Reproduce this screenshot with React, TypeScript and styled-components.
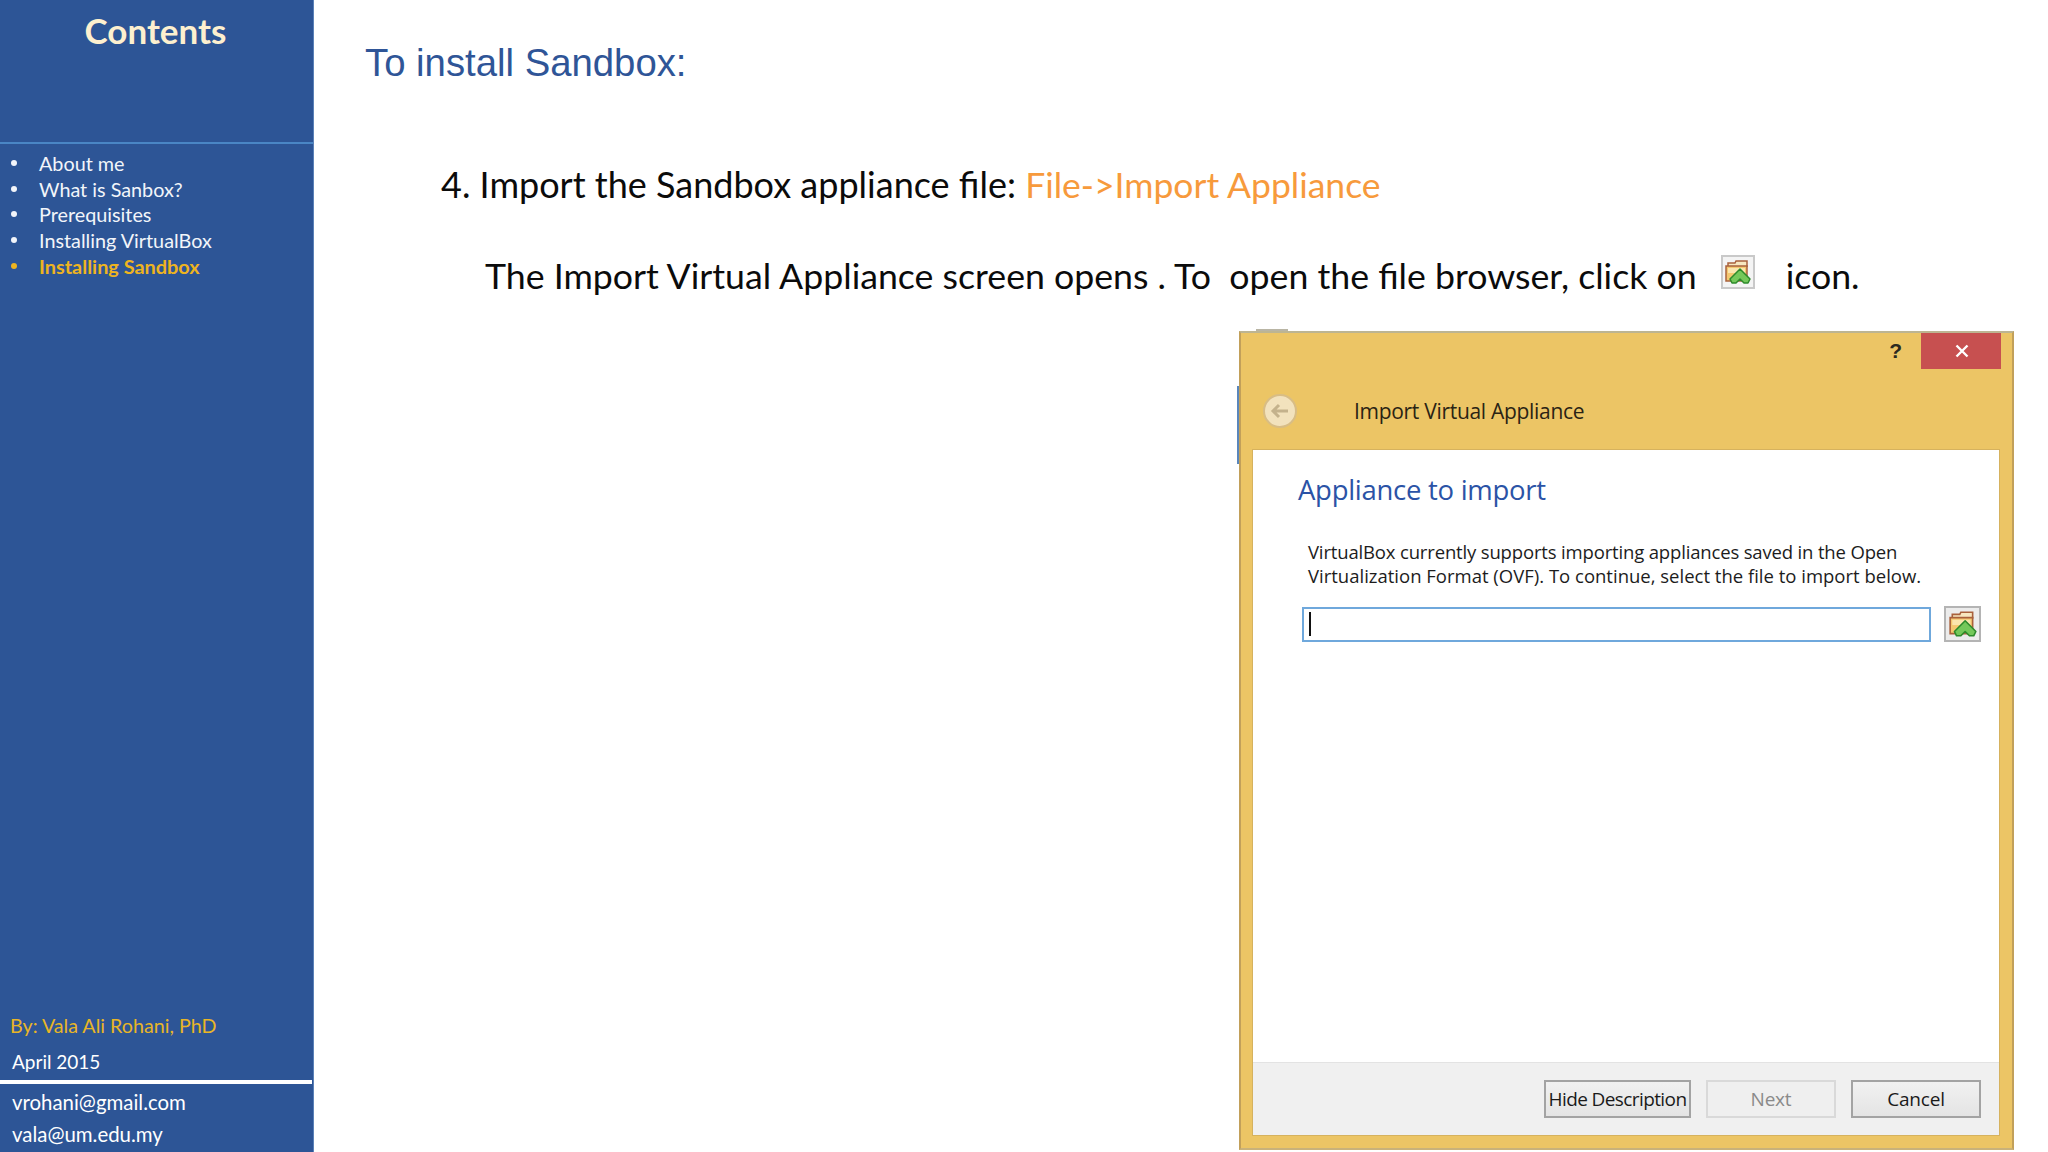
import styled, { createGlobalStyle } from "styled-components";

const GlobalStyle = createGlobalStyle`
    html, body {
        margin: 0;
        padding: 0;
        background: #fff;
    }
`;

const Page = styled.div`
    display: flex;
    width: 2048px;
    height: 1152px;
    overflow: hidden;
    font-family: "Lato", "Liberation Sans", sans-serif;
`;

const Sidebar = styled.aside`
    display: flex;
    flex-direction: column;
    flex: none;
    width: 314px;
    height: 1152px;
    box-sizing: border-box;
    background: #2d5596;
    border-right: 1px solid #5b82b8;
    color: #fff;
`;

const SideTitle = styled.h1`
    margin: 0;
    height: 144px;
    box-sizing: border-box;
    border-bottom: 2px solid #4a86c5;
    padding-top: 9px;
    padding-right: 2px;
    font-size: 35px;
    line-height: 42px;
    font-weight: 700;
    text-align: center;
    color: #fdf0cf;
`;

const NavList = styled.ul`
    list-style: none;
    margin: 0;
    padding: 6.5px 0 0 11px;
`;

const NavItem = styled.li<{ $active?: boolean }>`
    display: flex;
    align-items: center;
    height: 25.6px;
    font-size: ${(p) => (p.$active ? 19.9 : 19.8)}px;
    font-weight: ${(p) => (p.$active ? 700 : 400)};
    color: ${(p) => (p.$active ? "#eeb41f" : "#f2f5fa")};

    &::before {
        content: "";
        flex: none;
        width: 6px;
        height: 6px;
        margin-right: 22px;
        border-radius: 50%;
        background: currentColor;
    }
`;

const SideFooter = styled.div`
    margin-top: auto;
    display: flex;
    flex-direction: column;
`;

const Author = styled.div`
    padding-left: 10px;
    font-size: 19.7px;
    line-height: 24px;
    color: #e8b526;
`;

const DateLine = styled.div`
    padding: 12px 0 6px 12px;
    font-size: 19px;
    line-height: 24px;
`;

const FooterRule = styled.div`
    height: 4px;
    margin-right: 1px;
    background: #fff;
`;

const Contacts = styled.div`
    display: flex;
    flex-direction: column;
    gap: 8px;
    padding: 6px 0 6px 12px;
    font-size: 20.4px;
    line-height: 24px;
`;

const Content = styled.main`
    flex: 1;
    display: flex;
    flex-direction: column;
    min-width: 0;
`;

const Heading = styled.h2`
    margin: 0;
    padding: 39px 0 0 51px;
    font-family: "Liberation Sans", Arial, sans-serif;
    font-size: 38.3px;
    line-height: 48px;
    font-weight: 400;
    color: #2f5597;
`;

const StepLine = styled.p`
    margin: 0;
    padding: 74px 0 0 127px;
    font-size: 36px;
    line-height: 46px;
    color: #0b0b0b;
`;

const Orange = styled.span`
    font-size: 35.5px;
    color: #f79a3c;
`;

const InfoLine = styled.p`
    display: flex;
    align-items: center;
    margin: 0;
    padding: 45px 0 0 171px;
    font-size: 35.7px;
    line-height: 46px;
    white-space: pre;
    color: #0b0b0b;
`;

const InlineIcon = styled.span`
    display: inline-flex;
    align-items: center;
    justify-content: center;
    width: 34px;
    height: 34px;
    margin: -9px 31px 0 24px;
    box-sizing: border-box;
    background: #f4f4f4;
    border: 2px solid #c9c9c9;
`;

const DialogRow = styled.div`
    display: flex;
    justify-content: flex-end;
    padding: 32px 34px 0 0;
`;

const Dialog = styled.section`
    position: relative;
    display: flex;
    flex-direction: column;
    width: 775px;
    height: 819px;
    box-sizing: border-box;
    padding: 0 12px 12px 11px;
    background: #ecc565;
    border: 2px solid #c9b27a;
    border-top-color: #bdb592;
    border-left-color: #c2a05a;
    border-right-color: #c2a05a;
    font-family: "Open Sans", "Noto Sans", sans-serif;

    /* bits of the window behind the dialog */
    &::before {
        content: "";
        position: absolute;
        left: -4px;
        top: 53px;
        width: 2px;
        height: 78px;
        background: #5a86bb;
    }

    &::after {
        content: "";
        position: absolute;
        left: 15px;
        top: -4px;
        width: 32px;
        height: 2px;
        background: #b9b5a4;
    }
`;

const TopBar = styled.div`
    display: flex;
    justify-content: flex-end;
    align-items: center;
    flex: none;
    height: 36px;
`;

const HelpMark = styled.span`
    margin-right: 19px;
    font-family: "Liberation Sans", sans-serif;
    font-size: 21px;
    font-weight: 700;
    color: #2c2a20;
`;

const CloseButton = styled.span`
    display: flex;
    align-items: center;
    justify-content: center;
    width: 80px;
    height: 36px;
    box-sizing: border-box;
    margin-right: -1px;
    padding-left: 2px;
    background: #c75050;
`;

const TitleRow = styled.div`
    display: flex;
    align-items: center;
    flex: none;
    height: 80px;
    box-sizing: border-box;
    padding-top: 3px;
`;

const BackCircle = styled.span`
    display: flex;
    align-items: center;
    justify-content: center;
    flex: none;
    width: 34px;
    height: 34px;
    margin: 0 57px 0 11px;
    box-sizing: border-box;
    border-radius: 50%;
    background: #f2e2bd;
    border: 2px solid #d8bd85;
`;

const DialogTitle = styled.span`
    font-size: 21px;
    letter-spacing: -0.3px;
    color: #2a2314;
`;

const DialogBody = styled.div`
    flex: 1;
    display: flex;
    flex-direction: column;
    background: #fff;
    border: 1px solid #d6b25e;
    min-height: 0;
`;

const BodyMain = styled.div`
    flex: 1;
    padding: 21px 17px 0 45px;
`;

const BodyTitle = styled.h3`
    margin: 0;
    font-size: 27.5px;
    line-height: 38px;
    font-weight: 400;
    letter-spacing: -0.28px;
    color: #2b53a6;
`;

const Description = styled.div`
    margin: 31px 0 0 10px;
    font-size: 18.5px;
    line-height: 23.5px;
    white-space: nowrap;
    color: #1c1c1c;
`;

const DescriptionLine = styled.div<{ $spacing: number }>`
    letter-spacing: ${(p) => p.$spacing}px;
`;

const PathRow = styled.div`
    display: flex;
    align-items: center;
    gap: 13px;
    margin: 19px 0 0 4px;
`;

const PathInput = styled.div`
    display: flex;
    align-items: center;
    width: 629px;
    height: 35px;
    box-sizing: border-box;
    padding-left: 5px;
    border: 2px solid #6fa8dc;
`;

const Caret = styled.span`
    width: 2px;
    height: 24px;
    background: #111;
`;

const BrowseButton = styled.span`
    display: flex;
    align-items: center;
    justify-content: center;
    width: 37px;
    height: 36px;
    box-sizing: border-box;
    background: #ececec;
    border: 2px solid #b4b4b4;
`;

const BodyFooter = styled.div`
    display: flex;
    justify-content: flex-end;
    align-items: center;
    gap: 15px;
    flex: none;
    height: 72px;
    padding-right: 18px;
    background: #f0f0f0;
    border-top: 1px solid #e3e3e3;
`;

const DialogButton = styled.span<{ $disabled?: boolean; $width: number; $spacing?: number }>`
    display: flex;
    align-items: center;
    justify-content: center;
    width: ${(p) => p.$width}px;
    height: 38px;
    box-sizing: border-box;
    font-size: 19px;
    letter-spacing: ${(p) => p.$spacing ?? -0.2}px;
    color: ${(p) => (p.$disabled ? "#8a8a8a" : "#1a1a1a")};
    background: ${(p) => (p.$disabled ? "#efefef" : "linear-gradient(#f1f1f1, #e4e4e4)")};
    border: 2px solid ${(p) => (p.$disabled ? "#d9d9d9" : "#a3a3a3")};
`;

const FolderIcon = ({ size }: { size: number }) => (
    <svg width={size} height={size} viewBox="0 0 28 28">
        <path d="M4 8 V5 H11 L12 3 H23 V9" fill="#f7e7c0" stroke="#a9613c" strokeWidth="1.5" />
        <path d="M2 8 H23 V23 H2 Z" fill="#f4c870" stroke="#a9613c" strokeWidth="1.5" />
        <path d="M4 10 H21 V15 H4 Z" fill="#fbe6ae" />
        <path
            d="M16 11 L23 18 L26 21 L24 25 L20 25 L16 21 L12 25 L8 25 L6 21 Z"
            fill="#74c85a"
            stroke="#2d8a2b"
            strokeWidth="1.5"
            strokeLinejoin="round"
        />
    </svg>
);

const navItems = ["About me", "What is Sanbox?", "Prerequisites", "Installing VirtualBox"];

const App = () => {
    return (
        <Page>
            <GlobalStyle />
            <Sidebar>
                <SideTitle>Contents</SideTitle>
                <NavList>
                    {navItems.map((item) => (
                        <NavItem key={item}>{item}</NavItem>
                    ))}
                    <NavItem $active>Installing Sandbox</NavItem>
                </NavList>
                <SideFooter>
                    <Author>By: Vala Ali Rohani, PhD</Author>
                    <DateLine>April 2015</DateLine>
                    <FooterRule />
                    <Contacts>
                        <span>vrohani@gmail.com</span>
                        <span>vala@um.edu.my</span>
                    </Contacts>
                </SideFooter>
            </Sidebar>
            <Content>
                <Heading>To install Sandbox:</Heading>
                <StepLine>
                    4. Import the Sandbox appliance file: <Orange>File-&gt;Import Appliance</Orange>
                </StepLine>
                <InfoLine>
                    The Import Virtual Appliance screen opens . To  open the file browser, click on
                    <InlineIcon>
                        <FolderIcon size={28} />
                    </InlineIcon>
                    icon.
                </InfoLine>
                <DialogRow>
                    <Dialog>
                        <TopBar>
                            <HelpMark>?</HelpMark>
                            <CloseButton>
                                <svg width="14" height="14" viewBox="0 0 14 14">
                                    <path d="M1.5 1.5 L12.5 12.5 M12.5 1.5 L1.5 12.5" stroke="#fff" strokeWidth="2.4" />
                                </svg>
                            </CloseButton>
                        </TopBar>
                        <TitleRow>
                            <BackCircle>
                                <svg width="20" height="16" viewBox="0 0 20 16">
                                    <path d="M18 8 H3 M9 2 L3 8 L9 14" fill="none" stroke="#c4b28c" strokeWidth="3" />
                                </svg>
                            </BackCircle>
                            <DialogTitle>Import Virtual Appliance</DialogTitle>
                        </TitleRow>
                        <DialogBody>
                            <BodyMain>
                                <BodyTitle>Appliance to import</BodyTitle>
                                <Description>
                                    <DescriptionLine $spacing={-0.16}>
                                        VirtualBox currently supports importing appliances saved in the Open
                                    </DescriptionLine>
                                    <DescriptionLine $spacing={0}>
                                        Virtualization Format (OVF). To continue, select the file to import below.
                                    </DescriptionLine>
                                </Description>
                                <PathRow>
                                    <PathInput>
                                        <Caret />
                                    </PathInput>
                                    <BrowseButton>
                                        <FolderIcon size={30} />
                                    </BrowseButton>
                                </PathRow>
                            </BodyMain>
                            <BodyFooter>
                                <DialogButton $width={147} $spacing={-0.6}>Hide Description</DialogButton>
                                <DialogButton $width={130} $disabled>Next</DialogButton>
                                <DialogButton $width={130}>Cancel</DialogButton>
                            </BodyFooter>
                        </DialogBody>
                    </Dialog>
                </DialogRow>
            </Content>
        </Page>
    );
};

export default App;
